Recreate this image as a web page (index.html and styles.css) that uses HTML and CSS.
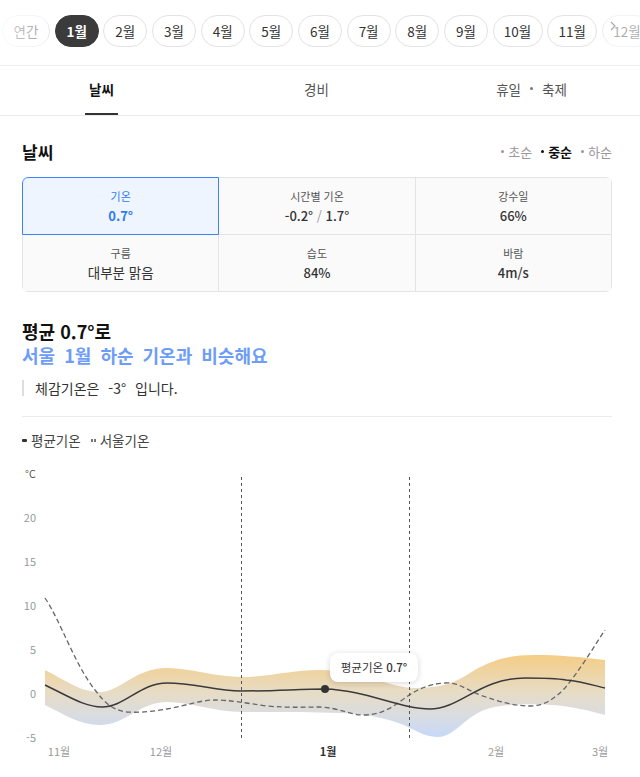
FILE: index.html
```html
<!DOCTYPE html>
<html lang="ko">
<head>
<meta charset="utf-8">
<title>날씨</title>
<link rel="stylesheet" href="styles.css">
</head>
<body>
<div class="months">
  <div class="month-track">
    <span class="pill year">연간</span>
    <span class="pill active">1월</span>
    <span class="pill">2월</span>
    <span class="pill">3월</span>
    <span class="pill">4월</span>
    <span class="pill">5월</span>
    <span class="pill">6월</span>
    <span class="pill">7월</span>
    <span class="pill">8월</span>
    <span class="pill">9월</span>
    <span class="pill wide">10월</span>
    <span class="pill wide">11월</span>
    <span class="pill wide">12월</span>
  </div>
  <div class="fade-left"></div>
  <div class="fade-right">
    <svg class="next" width="6" height="10" viewBox="0 0 6 10"><path d="M1 1 L5 5 L1 9" fill="none" stroke="#aaa" stroke-width="1.2"/></svg>
  </div>
</div>

<nav class="tabs">
  <div class="tab active"><span class="tab-label">날씨</span></div>
  <div class="tab"><span class="tab-label">경비</span></div>
  <div class="tab"><span class="tab-label">휴일<i class="mid-dot"></i>축제</span></div>
</nav>

<main class="wrap">
  <div class="sec-head">
    <h2 class="sec-title">날씨</h2>
    <div class="filters">
      <span class="filter">초순</span>
      <span class="filter on">중순</span>
      <span class="filter">하순</span>
    </div>
  </div>

  <div class="stats">
    <div class="cell sel"><span class="lbl">기온</span><span class="val">0.7°</span></div>
    <div class="cell"><span class="lbl">시간별 기온</span><span class="val">-0.2° <span class="slash">/</span> 1.7°</span></div>
    <div class="cell"><span class="lbl">강수일</span><span class="val">66%</span></div>
    <div class="cell"><span class="lbl">구름</span><span class="val big">대부분 맑음</span></div>
    <div class="cell"><span class="lbl">습도</span><span class="val">84%</span></div>
    <div class="cell"><span class="lbl">바람</span><span class="val">4m/s</span></div>
  </div>

  <h3 class="headline">평균 0.7°로<span class="blue">서울 1월 하순 기온과 비슷해요</span></h3>
  <p class="quote">체감기온은 -3° 입니다.</p>
  <div class="divider"></div>

  <div class="legend">
    <span class="lg-item"><i class="mk-solid"></i>평균기온</span>
    <span class="lg-item"><i class="mk-dash"><b></b><b></b></i>서울기온</span>
  </div>
</main>

<div class="chart">
  <svg class="chart-svg" width="640" height="317" viewBox="0 460 640 317">
    <defs>
      <linearGradient id="band" gradientUnits="userSpaceOnUse" x1="0" y1="655" x2="0" y2="737">
        <stop offset="0" stop-color="#f5cd85"/>
        <stop offset="0.45" stop-color="#e7dcc5"/>
        <stop offset="0.72" stop-color="#dbdcdf"/>
        <stop offset="1" stop-color="#c6d9f8"/>
      </linearGradient>
    </defs>
    <g class="yl">
      <text x="25" y="478" class="unit">°C</text>
      <text x="36" y="522" text-anchor="end">20</text>
      <text x="36" y="566" text-anchor="end">15</text>
      <text x="36" y="610" text-anchor="end">10</text>
      <text x="36" y="654" text-anchor="end">5</text>
      <text x="36" y="698" text-anchor="end">0</text>
      <text x="36" y="742" text-anchor="end">-5</text>
    </g>
    <path fill="url(#band)" d="M45,670 C65,680 80,692 100,692 C120,692 135,668 167,668 C190,668 215,677 242,677 C270,677 290,670 320,670 C360,670 390,688 415,688 C440,688 455,683 470,673 C490,660 510,655 533,655 C560,655 580,657 605,660 L605,715 C590,711 575,707 553,705 C540,704 510,703 490,708 C465,715 455,737 438,737 C428,737 420,733 410,728 C395,720 370,714 340,713 C310,712 280,712 242,712 C215,712 190,702 167,702 C140,702 125,725 100,725 C80,725 65,715 45,705 Z"/>
    <line x1="241.5" y1="477" x2="241.5" y2="738" stroke="#555" stroke-width="1" stroke-dasharray="3 3"/>
    <line x1="409.5" y1="477" x2="409.5" y2="738" stroke="#555" stroke-width="1" stroke-dasharray="3 3"/>
    <path fill="none" stroke="#666" stroke-width="1.3" stroke-dasharray="5 3" d="M45,598 C60,620 75,665 95,690 C105,703 112,710 127,712 C140,713 155,711 167,709 C185,706 200,700 215,700 C230,700 245,703 267,706 C290,708 305,707 320,707 C340,708 350,715 363,715 C378,715 388,710 398,703 C413,692 425,684 445,683 C458,682 465,689 480,695 C500,702 515,706 530,706 C545,706 555,698 565,688 C580,670 595,645 605,630"/>
    <path fill="none" stroke="#3a3a3a" stroke-width="1.5" d="M45,685 C70,697 85,707 102,707 C125,707 140,683 167,683 C195,683 215,691 241,691 C275,691 300,689 325,689 C365,690 400,709 430,709 C460,709 480,678 525,678 C545,678 560,679 566,680 C585,682 595,686 605,688"/>
    <circle cx="325" cy="689" r="4" fill="#333"/>
    <g class="xl">
      <text x="59" y="756" text-anchor="middle">11월</text>
      <text x="161" y="756" text-anchor="middle">12월</text>
      <text x="328" y="756" text-anchor="middle" class="cur">1월</text>
      <text x="496" y="756" text-anchor="middle">2월</text>
      <text x="600" y="756" text-anchor="middle">3월</text>
    </g>
  </svg>
  <div class="tooltip">평균기온 <b>0.7°</b></div>
</div>
</body>
</html>
```
FILE: styles.css
```css
* { box-sizing: border-box; }
html, body { margin: 0; padding: 0; }
body {
  font-family: "Noto Sans CJK KR", "Noto Sans", sans-serif;
  color: #333;
  background: #fff;
  width: 640px;
  overflow: hidden;
}

/* month pills */
.months {
  position: relative;
  height: 66px;
  padding-top: 15px;
  border-bottom: 1px solid #ededed;
  overflow: hidden;
}
.month-track {
  display: flex;
  gap: 4.67px;
  padding-left: 2px;
  white-space: nowrap;
}
.pill {
  flex: none;
  width: 44px;
  height: 32px;
  border: 1px solid #e3e3e3;
  border-radius: 16px;
  font-size: 13.5px;
  line-height: 30px;
  text-align: center;
  color: #333;
  background: #fff;
}
.pill.year { width: 48px; }
.pill.wide { width: 50px; }
.pill.active {
  background: #3b3b3b;
  border-color: #3b3b3b;
  color: #fff;
  font-weight: 700;
}
.fade-left {
  position: absolute;
  left: 0; top: 0; bottom: 0;
  width: 52px;
  background: linear-gradient(to right, rgba(255,255,255,0.8), rgba(255,255,255,0.55) 85%, rgba(255,255,255,0));
}
.fade-right {
  position: absolute;
  left: 600px; top: 0; bottom: 0; right: 0;
  background: linear-gradient(to right, rgba(255,255,255,0.3), rgba(255,255,255,0.6) 30%, rgba(255,255,255,0.6));
}
.next {
  position: absolute;
  left: 10px;
  top: 21px;
}

/* tabs */
.tabs {
  display: grid;
  grid-template-columns: repeat(3, 215px);
  margin-left: -6px;
  height: 50px;
  border-bottom: 1px solid #ebebeb;
}
.tab {
  display: flex;
  justify-content: center;
  font-size: 13.5px;
  color: #555;
}
.tab-label {
  display: flex;
  align-items: center;
  height: 49px;
  padding: 0 4px 4px;
}
.tab.active .tab-label {
  color: #111;
  font-weight: 700;
  border-bottom: 2px solid #333;
  padding-bottom: 2px;
}
.mid-dot {
  display: inline-block;
  width: 3px;
  height: 3px;
  border-radius: 50%;
  background: #777;
  margin: 0 9px;
}

/* content */
.wrap {
  padding: 0 28px 0 22px;
}
.sec-head {
  display: flex;
  justify-content: space-between;
  align-items: center;
  margin-top: 24px;
  height: 24px;
}
.sec-title {
  margin: 0;
  font-size: 17px;
  line-height: 24px;
  font-weight: 700;
  color: #111;
}
.filters {
  display: flex;
  gap: 9px;
  font-size: 13px;
  color: #999;
  padding-bottom: 2px;
}
.filter {
  display: flex;
  align-items: center;
}
.filter::before {
  content: "";
  width: 3px;
  height: 3px;
  border-radius: 50%;
  background: currentColor;
  margin-right: 4px;
}
.filter.on {
  color: #111;
  font-weight: 700;
}

.stats {
  margin-top: 13px;
  display: grid;
  grid-template-columns: repeat(3, 1fr);
  gap: 1px;
  padding: 1px;
  background: #e4e4e4;
  border-radius: 6px;
  overflow: hidden;
}
.cell {
  height: 56px;
  background: #fafafa;
  display: flex;
  flex-direction: column;
  align-items: center;
  justify-content: center;
  gap: 3px;
}
.cell.sel {
  margin: -1px;
  height: 58px;
  background: #eef5ff;
  border: 1px solid #3a82f5;
  border-top-left-radius: 6px;
}
.lbl {
  font-size: 11px;
  line-height: 16px;
  color: #555;
}
.val {
  font-size: 13px;
  line-height: 17px;
  font-weight: 500;
  color: #333;
}
.val.big {
  font-weight: 400;
  font-size: 13.5px;
}
.slash { color: #999; font-weight: 400; }
.cell.sel .lbl, .cell.sel .val { color: #2f7bf2; }
.cell.sel .val { font-weight: 700; }

.headline {
  margin: 27px 0 0;
  font-size: 18px;
  line-height: 24px;
  font-weight: 700;
  color: #111;
}
.headline .blue {
  display: block;
  color: #6d9df6;
  word-spacing: 4px;
}
.quote {
  margin: 13px 0 0;
  border-left: 2px solid #dedede;
  padding-left: 11px;
  font-size: 14px;
  line-height: 16px;
  color: #333;
  word-spacing: 5px;
}
.divider {
  margin-top: 20px;
  border-top: 1px solid #ececec;
}
.legend {
  margin-top: 14px;
  display: flex;
  gap: 10px;
  font-size: 13.5px;
  line-height: 18px;
  color: #444;
}
.lg-item {
  display: flex;
  align-items: center;
}
.mk-solid {
  display: inline-block;
  width: 5px;
  height: 3px;
  border-radius: 1px;
  background: #333;
  margin-right: 4px;
}
.mk-dash {
  display: inline-flex;
  gap: 1px;
  margin-right: 4px;
}
.mk-dash b {
  display: block;
  width: 2px;
  height: 3px;
  background: #777;
}

/* chart */
.chart {
  position: relative;
  margin-top: 11px;
  height: 317px;
}
.chart-svg {
  display: block;
}
.yl text, .xl text {
  font-family: "Noto Sans CJK KR", "Noto Sans", sans-serif;
  font-size: 11px;
  fill: #999;
}
.yl .unit { fill: #555; font-size: 10.5px; }
.xl .cur { fill: #333; font-weight: 700; }
.tooltip {
  position: absolute;
  left: 330px;
  top: 193px;
  width: 88px;
  height: 29px;
  background: #fff;
  border-radius: 8px;
  box-shadow: 0 1px 6px rgba(0,0,0,0.16);
  font-size: 11.5px;
  line-height: 29px;
  text-align: center;
  color: #333;
}
.tooltip b { font-weight: 500; }
```
